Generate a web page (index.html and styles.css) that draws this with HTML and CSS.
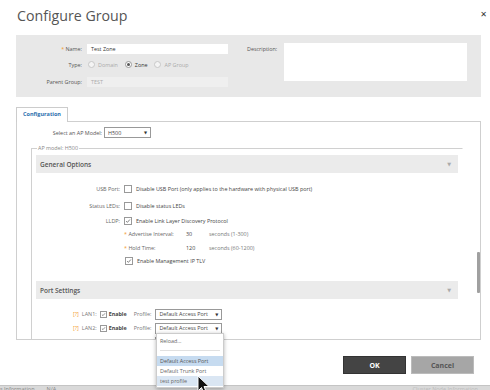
FILE: index.html
```html
<!DOCTYPE html>
<html lang="en">
<head>
    <meta charset="UTF-8">
    <meta name="viewport" content="width=device-width, initial-scale=1.0">
    <title>Configure Group</title>
    <link rel="stylesheet" href="styles.css">
</head>
<body>
    <div class="dialog">
        <div class="dialog-head">
            <h1 class="dialog-title">Configure Group</h1>
            <span class="dialog-close">&#x2715;</span>
        </div>

        <div class="group-panel">
            <div class="group-left">
                <div class="field-row">
                    <label class="field-label"><span class="req">*</span> Name:</label>
                    <div class="text-input">Test Zone</div>
                </div>
                <div class="field-row row-type">
                    <label class="field-label">Type:</label>
                    <span class="radio"></span><span class="radio-text muted">Domain</span>
                    <span class="radio checked"></span><span class="radio-text strong">Zone</span>
                    <span class="radio"></span><span class="radio-text muted">AP Group</span>
                </div>
                <div class="field-row row-parent">
                    <label class="field-label muted">Parent Group:</label>
                    <div class="text-input disabled">TEST</div>
                </div>
            </div>
            <div class="group-right">
                <label class="desc-label">Description:</label>
                <div class="text-area"></div>
            </div>
        </div>

        <div class="tabs">
            <div class="tab active">Configuration</div>
        </div>
        <div class="tab-body">
            <div class="model-row">
                <label class="model-label">Select an AP Model:</label>
                <div class="select model-select"><span>H500</span><span class="caret">&#9660;</span></div>
            </div>

            <fieldset class="model-set">
                <legend>AP model: H500</legend>

                <div class="section-bar">General Options<span class="bar-caret">&#9660;</span></div>

                <div class="opt-row first">
                    <label class="opt-label">USB Port:</label>
                    <span class="check"></span>
                    <span class="opt-text">Disable USB Port (only applies to the hardware with physical USB port)</span>
                </div>
                <div class="opt-row gap4">
                    <label class="opt-label">Status LEDs:</label>
                    <span class="check"></span>
                    <span class="opt-text">Disable status LEDs</span>
                </div>
                <div class="opt-row gap2">
                    <label class="opt-label">LLDP:</label>
                    <span class="check on"><svg viewBox="0 0 8 8"><path d="M1.5 4.2 L3.2 5.8 L6.5 2" fill="none" stroke="#555" stroke-width="1"/></svg></span>
                    <span class="opt-text">Enable Link Layer Discovery Protocol</span>
                </div>
                <div class="sub-row">
                    <span class="sub-label"><span class="req">*</span> Advertise Interval:</span>
                    <span class="sub-value">30</span>
                    <span class="sub-hint">seconds (1-300)</span>
                </div>
                <div class="sub-row gap1">
                    <span class="sub-label"><span class="req">*</span> Hold Time:</span>
                    <span class="sub-value">120</span>
                    <span class="sub-hint">seconds (60-1200)</span>
                </div>
                <div class="sub-row mgmt">
                    <span class="check on"><svg viewBox="0 0 8 8"><path d="M1.5 4.2 L3.2 5.8 L6.5 2" fill="none" stroke="#555" stroke-width="1"/></svg></span>
                    <span class="opt-text">Enable Management IP TLV</span>
                </div>

                <div class="section-bar port-bar">Port Settings<span class="bar-caret">&#9660;</span></div>

                <div class="port-row first">
                    <span class="help">[?]</span>
                    <span class="lan">LAN1:</span>
                    <span class="check on"><svg viewBox="0 0 8 8"><path d="M1.5 4.2 L3.2 5.8 L6.5 2" fill="none" stroke="#555" stroke-width="1"/></svg></span>
                    <span class="enable">Enable</span>
                    <span class="profile">Profile:</span>
                    <div class="select port-select"><span>Default Access Port</span><span class="caret">&#9660;</span></div>
                </div>
                <div class="port-row">
                    <span class="help">[?]</span>
                    <span class="lan">LAN2:</span>
                    <span class="check on"><svg viewBox="0 0 8 8"><path d="M1.5 4.2 L3.2 5.8 L6.5 2" fill="none" stroke="#555" stroke-width="1"/></svg></span>
                    <span class="enable">Enable</span>
                    <span class="profile">Profile:</span>
                    <div class="select port-select"><span>Default Access Port</span><span class="caret">&#9660;</span></div>
                </div>
                <div class="port-row">
                    <span class="help">[?]</span>
                    <span class="lan">LAN3:</span>
                    <span class="check on"><svg viewBox="0 0 8 8"><path d="M1.5 4.2 L3.2 5.8 L6.5 2" fill="none" stroke="#555" stroke-width="1"/></svg></span>
                    <span class="enable">Enable</span>
                    <span class="profile">Profile:</span>
                    <div class="select port-select"><span>Default Access Port</span><span class="caret">&#9660;</span></div>
                </div>
            </fieldset>

            <div class="scroll-thumb"></div>
        </div>

        <div class="dialog-foot">
            <button class="btn btn-ok" type="button">OK</button>
            <button class="btn btn-cancel" type="button">Cancel</button>
        </div>

        <ul class="profile-menu">
            <li class="menu-item">Reload...</li>
            <li class="menu-sep"></li>
            <li class="menu-item selected">Default Access Port</li>
            <li class="menu-item">Default Trunk Port</li>
            <li class="menu-item hover">test profile</li>
        </ul>

        <svg class="cursor" width="13" height="20" viewBox="0 0 13 20">
            <path d="M1 1 L1 16 L4.5 12.5 L7 18.5 L9.5 17.5 L7 11.5 L12 11.5 Z" fill="#111" stroke="#fff" stroke-width="1"/>
        </svg>
    </div>

    <div class="page-strip">
        <span class="strip-text">s Information</span>
        <span class="strip-text">N/A</span>
        <span class="strip-text right">Cluster Node Information</span>
    </div>
</body>
</html>
```

FILE: styles.css
```css
* {
    box-sizing: border-box;
}

body {
    margin: 0;
    background: #fff;
    font-family: "Open Sans", "DejaVu Sans", sans-serif;
    font-size: 5.4px;
    color: #555;
    width: 490px;
    height: 390px;
    overflow: hidden;
}

.dialog {
    position: relative;
    height: 385px;
}

.dialog-head {
    display: flex;
    justify-content: space-between;
    align-items: flex-start;
    height: 35px;
    padding: 6px 3px 0 17px;
}

.dialog-title {
    margin: 0;
    font-size: 14.2px;
    font-weight: normal;
    color: #555;
    line-height: 20px;
}

.dialog-close {
    font-size: 8px;
    font-weight: bold;
    color: #333;
    margin-top: 2px;
}

.req {
    color: #f39a2b;
}

.muted {
    color: #aaa;
}

.strong {
    color: #333;
}

/* gray group panel */
.group-panel {
    display: flex;
    margin: 0 9px 0 16px;
    height: 62px;
    background: #e8e8e8;
    padding-top: 8px;
}

.group-left {
    width: 222px;
}

.field-row {
    display: flex;
    align-items: center;
    height: 11px;
}

.row-type {
    margin-top: 5px;
}

.row-parent {
    margin-top: 6px;
}

.field-label {
    width: 66px;
    margin-right: 5px;
    text-align: right;
    color: #555;
}

.text-input {
    width: 141px;
    height: 10px;
    background: #fff;
    padding-left: 4px;
    line-height: 10px;
    color: #333;
}

.text-input.disabled {
    background: #efefef;
    color: #aaa;
}

.radio {
    width: 7px;
    height: 7px;
    border-radius: 50%;
    border: 1px solid #c8c8c8;
    background: #f4f4f4;
    margin: 0 3px 0 1px;
    display: inline-flex;
    align-items: center;
    justify-content: center;
}

.radio.checked {
    border-color: #999;
    background: #fff;
}

.radio.checked::after {
    content: "";
    width: 3px;
    height: 3px;
    border-radius: 50%;
    background: #555;
}

.radio-text {
    margin-right: 6px;
}

.group-right {
    display: flex;
    align-items: flex-start;
    padding-left: 9px;
}

.desc-label {
    width: 37px;
    padding-top: 2px;
}

.text-area {
    width: 183px;
    height: 38px;
    background: #fff;
}

/* tabs */
.tabs {
    display: flex;
    margin: 10px 0 0 16px;
    height: 14px;
}

.tab {
    border: 1px solid #ccc;
    border-bottom: none;
    background: #fff;
    width: 52px;
    height: 15px;
    text-align: center;
    line-height: 13px;
    color: #2d6fae;
    font-weight: bold;
    font-size: 5.5px;
    position: relative;
    z-index: 1;
}

.tab-body {
    position: relative;
    margin: 0 9px 0 16px;
    height: 219px;
    border: 1px solid #cfcfcf;
    overflow: hidden;
}

.model-row {
    display: flex;
    align-items: center;
    height: 11px;
    margin-top: 5px;
    padding-left: 32px;
}

.model-label {
    width: 53px;
    text-align: right;
    margin-right: 2px;
}

.select {
    display: flex;
    align-items: center;
    justify-content: space-between;
    border: 1px solid #999;
    background: #fff;
    padding: 0 3px 0 3px;
    color: #444;
}

.caret {
    font-size: 4px;
    color: #333;
}

.model-select {
    width: 47px;
    height: 11px;
}

.model-set {
    margin: 6px 17px 0 14px;
    padding: 0 4px;
    border: 1px solid #d0d0d0;
    border-right-color: transparent;
    min-width: 0;
    height: 240px;
}

.model-set legend {
    margin-left: 1px;
    padding: 0 1px;
    color: #888;
    line-height: 8px;
}

.section-bar {
    display: flex;
    justify-content: space-between;
    align-items: center;
    height: 18px;
    margin-top: 3px;
    padding: 0 7px 0 4px;
    background: #ebebeb;
    color: #555;
    font-size: 6.5px;
    font-weight: 600;
}

.bar-caret {
    font-size: 5px;
    color: #aaa;
}

.port-bar {
    margin-top: 14px;
}

.opt-row {
    display: flex;
    align-items: center;
    height: 13px;
}

.opt-row.first {
    margin-top: 9px;
}

.gap4 {
    margin-top: 4px;
}

.gap2 {
    margin-top: 2px;
}

.gap1 {
    margin-top: 1px;
}

.opt-label {
    width: 84px;
    margin-right: 4px;
    text-align: right;
    color: #666;
}

.check {
    width: 8px;
    height: 8px;
    border: 1px solid #999;
    background: #fff;
    display: inline-block;
    margin-right: 4px;
    flex-shrink: 0;
}

.check svg {
    display: block;
    width: 6px;
    height: 6px;
}

.opt-text {
    color: #444;
}

.sub-row {
    display: flex;
    align-items: center;
    height: 13px;
    padding-left: 88px;
}

.sub-label {
    width: 62px;
    color: #666;
}

.sub-value {
    width: 23px;
    color: #444;
}

.sub-hint {
    color: #777;
}

.sub-row.mgmt {
    padding-left: 89px;
}

.port-row {
    display: flex;
    align-items: center;
    height: 14px;
    padding-left: 37px;
}

.port-row.first {
    margin-top: 8px;
}

.port-row .check {
    width: 7px;
    height: 7px;
    margin-right: 2px;
}

.port-row .check svg {
    width: 5px;
    height: 5px;
}

.help {
    color: #f39a2b;
    margin-right: 3px;
}

.lan {
    color: #777;
    margin-right: 3px;
}

.enable {
    font-weight: bold;
    color: #444;
    margin-right: 7px;
}

.profile {
    color: #777;
    margin-right: 4px;
}

.port-select {
    width: 67px;
    height: 11px;
}

.scroll-thumb {
    position: absolute;
    right: 0;
    top: 130px;
    width: 3px;
    height: 41px;
    background: #a0a0a0;
    border-radius: 1px;
}

/* footer */
.dialog-foot {
    display: flex;
    justify-content: flex-end;
    gap: 5px;
    margin-top: 16px;
    padding-right: 16px;
}

.btn {
    width: 63px;
    height: 18px;
    border: 1px solid #bbb;
    font-family: "Open Sans", "DejaVu Sans", sans-serif;
    font-size: 7px;
    font-weight: bold;
}

.btn-ok {
    background: #444;
    border-color: #333;
    color: #fff;
}

.btn-cancel {
    background: #a6a6a6;
    color: #555;
}

/* open profile dropdown */
.profile-menu {
    position: absolute;
    left: 156px;
    top: 333px;
    width: 68px;
    margin: 0;
    padding: 2px 0 1px;
    list-style: none;
    background: #fff;
    border: 1px solid #ccc;
    box-shadow: 0 1px 4px rgba(0, 0, 0, 0.3);
}

.menu-item {
    height: 10px;
    line-height: 10px;
    padding-left: 3px;
    color: #666;
}

.menu-sep {
    height: 1px;
    margin: 4px 3px 5px;
    background: #e0e0e0;
}

.menu-item.selected {
    background: #c6dbf0;
    color: #555;
}

.menu-item.hover {
    background: #dae6f3;
}

.cursor {
    position: absolute;
    left: 197px;
    top: 375px;
}

/* page behind the dialog */
.page-strip {
    display: flex;
    gap: 12px;
    height: 5px;
    background: #d9d9d9;
    border-top: 1px solid #c4c4c4;
    overflow: hidden;
    line-height: 6px;
}

.strip-text {
    color: #888;
    font-size: 5.5px;
}

.strip-text.right {
    margin-left: auto;
    margin-right: 12px;
    color: #bbb;
}
```
